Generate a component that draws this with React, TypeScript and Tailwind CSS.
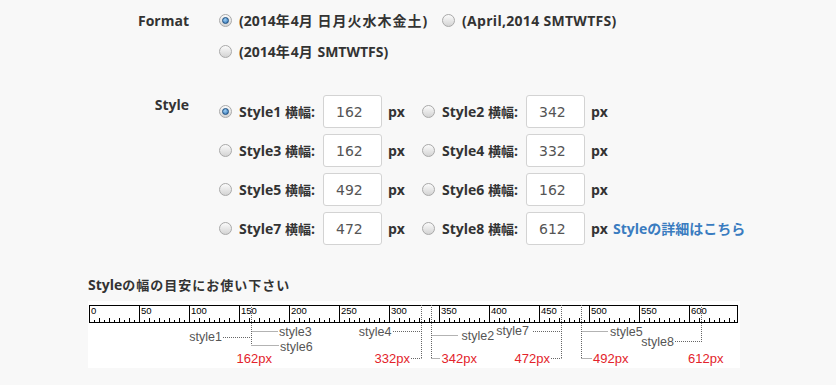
const Radio = ({ checked = false }: { checked?: boolean }) => {
  return (
    <span className="flex h-[13px] w-[13px] shrink-0 items-center justify-center rounded-full border border-[#a9a9a9] bg-linear-to-b from-[#fbfbfb] to-[#d4d4d4]">
      {checked && (
        <span className="h-[7px] w-[7px] rounded-full border border-[#1d4f80] bg-[radial-gradient(circle_at_40%_35%,#9fd0f5,#2a6db0)]" />
      )}
    </span>
  );
};

const Option = ({ n, w, checked }: { n: number; w: number; checked?: boolean }) => {
  return (
    <div className="flex items-center">
      <Radio checked={checked} />
      <span className="ml-[7px] w-[84px] whitespace-nowrap">
        Style{n} <span className="text-[13px]">横幅</span>:
      </span>
      <input
        readOnly
        defaultValue={w}
        className="h-[33px] w-[59px] rounded-[3px] border border-[#d3d3d3] bg-white px-[12px] font-['DejaVu_Sans',sans-serif] text-[14px] font-normal text-[#555] outline-none"
      />
      <span className="ml-[6px]">px</span>
    </div>
  );
};

const rows = [
  [
    { n: 1, w: 162, checked: true },
    { n: 2, w: 342 },
  ],
  [
    { n: 3, w: 162 },
    { n: 4, w: 332 },
  ],
  [
    { n: 5, w: 492 },
    { n: 6, w: 162 },
  ],
  [
    { n: 7, w: 472 },
    { n: 8, w: 612 },
  ],
];

const OX = 1;

const Ruler = () => {
  const ticks = [];
  for (let v = 0; v <= 645; v += 5) {
    const x = OX + v + 0.5;
    if (v % 50 === 0) {
      ticks.push(<line key={v} x1={x} y1={4} x2={x} y2={22} stroke="#000" />);
      ticks.push(
        <text key={"t" + v} x={x + 1.5} y={13} fontSize={9.5} fill="#000">
          {v}
        </text>
      );
    } else {
      const len = v % 10 === 0 ? 5 : 3;
      ticks.push(<line key={v} x1={x} y1={22 - len} x2={x} y2={22} stroke="#000" />);
    }
  }

  const px = (v: number) => OX + v + 0.5;
  const dot = { stroke: "#666", strokeDasharray: "1 1" };

  return (
    <svg width={652} height={67} className="block font-['Liberation_Sans',sans-serif] font-normal">
      <rect x={0} y={0} width={652} height={67} fill="#fff" />
      <line x1={OX} y1={4.5} x2={649.5} y2={4.5} stroke="#000" />
      <line x1={OX} y1={21.5} x2={649.5} y2={21.5} stroke="#000" />
      <line x1={649.5} y1={4} x2={649.5} y2={22} stroke="#000" />
      {ticks}

      {/* 162 */}
      <line x1={px(162)} y1={4} x2={px(162)} y2={44} {...dot} />
      <line x1={135} y1={36.5} x2={px(162)} y2={36.5} {...dot} />
      <line x1={px(162)} y1={30.5} x2={190} y2={30.5} {...dot} />
      <line x1={px(162)} y1={44.5} x2={191} y2={44.5} {...dot} />
      <text x={134} y={40} textAnchor="end" fontSize={12.5} fill="#555">style1</text>
      <text x={191} y={34.5} fontSize={12.5} fill="#555">style3</text>
      <text x={192} y={50} fontSize={12.5} fill="#555">style6</text>
      <text x={148.5} y={61.5} fontSize={13} fill="#e3232b">162px</text>

      {/* 332 */}
      <line x1={px(332)} y1={4} x2={px(332)} y2={57} {...dot} />
      <line x1={305} y1={30.5} x2={px(332)} y2={30.5} {...dot} />
      <line x1={323} y1={57.5} x2={px(332)} y2={57.5} {...dot} />
      <text x={303.5} y={35} textAnchor="end" fontSize={12.5} fill="#555">style4</text>
      <text x={322} y={61.5} textAnchor="end" fontSize={13} fill="#e3232b">332px</text>

      {/* 342 */}
      <line x1={px(342)} y1={4} x2={px(342)} y2={57} {...dot} />
      <line x1={px(342)} y1={34.5} x2={370} y2={34.5} {...dot} />
      <line x1={px(342)} y1={57.5} x2={352} y2={57.5} {...dot} />
      <text x={373.5} y={38.5} fontSize={12.5} fill="#555">style2</text>
      <text x={353.5} y={61.5} fontSize={13} fill="#e3232b">342px</text>

      {/* 472 */}
      <line x1={px(472)} y1={4} x2={px(472)} y2={57} {...dot} />
      <line x1={445} y1={30.5} x2={px(472)} y2={30.5} {...dot} />
      <line x1={463} y1={57.5} x2={px(472)} y2={57.5} {...dot} />
      <text x={441} y={34.3} textAnchor="end" fontSize={12.5} fill="#555">style7</text>
      <text x={462} y={61.5} textAnchor="end" fontSize={13} fill="#e3232b">472px</text>

      {/* 492 */}
      <line x1={px(492)} y1={4} x2={px(492)} y2={57} {...dot} />
      <line x1={px(492)} y1={30.5} x2={520} y2={30.5} {...dot} />
      <line x1={px(492)} y1={57.5} x2={504} y2={57.5} {...dot} />
      <text x={522} y={35} fontSize={12.5} fill="#555">style5</text>
      <text x={505} y={61.5} fontSize={13} fill="#e3232b">492px</text>

      {/* 612 */}
      <line x1={px(612)} y1={4} x2={px(612)} y2={41} {...dot} />
      <line x1={587} y1={40.5} x2={px(612)} y2={40.5} {...dot} />
      <text x={586} y={45} textAnchor="end" fontSize={12.5} fill="#555">style8</text>
      <text x={600} y={61.5} fontSize={13} fill="#e3232b">612px</text>
    </svg>
  );
};

export default function App() {
  return (
    <div className="h-[385px] w-[836px] overflow-hidden bg-[#f8f8f8] font-['Open_Sans','Noto_Sans_CJK_JP',sans-serif] text-[14px] font-bold text-[#333]">
      {/* Format */}
      <div className="flex pt-[5px]">
        <div className="h-[31px] w-[189px] text-right leading-[31px]">Format</div>
        <div className="ml-[30px] flex flex-col">
          <div className="flex h-[31px] items-center">
            <div className="flex w-[223px] items-center">
              <Radio checked />
              <span className="ml-[7px] whitespace-nowrap">
                (2014<span className="tracking-[1px]">年</span>4<span className="tracking-[1px]">月</span>{" "}
                <span className="tracking-[1px]">日月火水木金土</span>)
              </span>
            </div>
            <Radio />
            <span className="ml-[7px] whitespace-nowrap tracking-[0.3px]">(April,2014 SMTWTFS)</span>
          </div>
          <div className="flex h-[31px] items-center">
            <Radio />
            <span className="ml-[7px] whitespace-nowrap">
              (2014<span className="tracking-[1px]">年</span>4<span className="tracking-[1px]">月</span> SMTWTFS)
            </span>
          </div>
        </div>
      </div>

      {/* Style */}
      <div className="mt-[25px] flex">
        <div className="w-[189px] pt-[4px] text-right leading-[18px]">Style</div>
        <div className="ml-[30px] flex flex-col">
          {rows.map((row, i) => (
            <div key={i} className="flex h-[39px] items-center">
              <div className="w-[203px]">
                <Option {...row[0]} />
              </div>
              <Option {...row[1]} />
              {i === 3 && (
                <a className="ml-[5px] whitespace-nowrap text-[#3a7cc0]">
                  Style<span className="text-[14px]">の詳細はこちら</span>
                </a>
              )}
            </div>
          ))}
        </div>
      </div>

      {/* Ruler */}
      <div className="mt-[27px] pl-[88px]">
        <div className="h-[20px] leading-[20px]">
          Style<span className="text-[13px] tracking-[1px]">の幅の目安にお使い下さい</span>
        </div>
        <div className="mt-[6px]">
          <Ruler />
        </div>
      </div>
    </div>
  );
}
